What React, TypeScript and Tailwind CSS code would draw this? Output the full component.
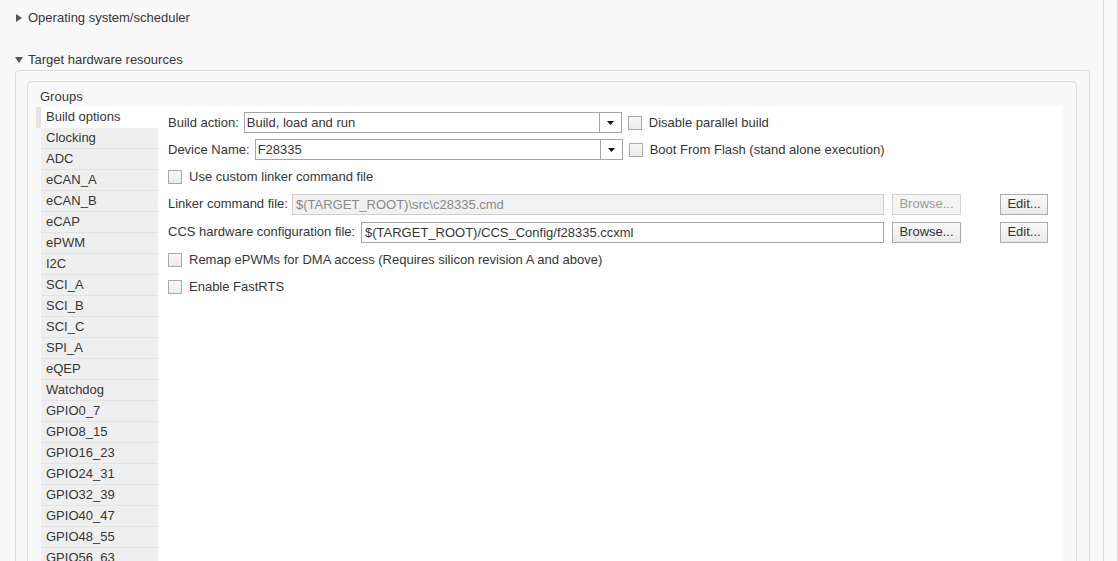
const groups = [
  'Build options',
  'Clocking',
  'ADC',
  'eCAN_A',
  'eCAN_B',
  'eCAP',
  'ePWM',
  'I2C',
  'SCI_A',
  'SCI_B',
  'SCI_C',
  'SPI_A',
  'eQEP',
  'Watchdog',
  'GPIO0_7',
  'GPIO8_15',
  'GPIO16_23',
  'GPIO24_31',
  'GPIO32_39',
  'GPIO40_47',
  'GPIO48_55',
  'GPIO56_63',
];

const Checkbox = () => (
  <span className="inline-block w-[14px] h-[14px] border border-[#a9a9a9] bg-gradient-to-b from-[#f7f7f7] to-[#ececec] shrink-0" />
);

const Select = ({ value, width }: { value: string; width: string }) => (
  <div className={`${width} h-[21px] flex border border-[#a5a5a5] bg-white`}>
    <div className="flex-1 pl-[2px] leading-[19px]">{value}</div>
    <div className="w-[22px] border-l border-[#a5a5a5] flex items-center justify-center bg-white">
      <svg width="7" height="4" viewBox="0 0 7 4">
        <path d="M0 0h7L3.5 4z" fill="#111" />
      </svg>
    </div>
  </div>
);

const Button = ({ label, disabled, width }: { label: string; disabled?: boolean; width: string }) => (
  <div
    className={`${width} h-[21px] flex items-center justify-center border ${
      disabled
        ? 'border-[#d2d2d2] text-[#9a9a9a] bg-[#f4f4f4]'
        : 'border-[#acacac] text-[#333] bg-gradient-to-b from-[#fafafa] to-[#e9e9e9]'
    }`}
  >
    {label}
  </div>
);

const App = () => {
  return (
    <div
      className="w-[1118px] h-[561px] overflow-hidden flex bg-[#f9f9f9] text-[13px] text-[#363636]"
      style={{ fontFamily: '"Liberation Sans", Arial, sans-serif' }}
    >
      <div className="w-[1104px] border-r border-[#dcdcdc] shrink-0">
        <div className="pt-[10px] h-[26px] flex items-center">
          <div className="flex items-center h-[16px] pl-[16px]">
            <svg width="6" height="8" viewBox="0 0 6 8" className="mr-[6px]">
              <path d="M0 0l6 4-6 4z" fill="#555" />
            </svg>
            <span>Operating system/scheduler</span>
          </div>
        </div>
        <div className="mt-[25px] h-[17px] flex items-center pl-[15px]">
          <svg width="8" height="6" viewBox="0 0 8 6" className="mr-[5px]">
            <path d="M0 0h8L4 6z" fill="#555" />
          </svg>
          <span>Target hardware resources</span>
        </div>
        <div className="ml-[15px] mt-[2px] w-[1075px] h-[600px] border border-[#dcdcdc] rounded-[4px] pl-[11px] pr-[12px] pt-[10px]">
          <div className="w-[1050px] h-[600px] border border-[#dcdcdc] rounded-[4px] pl-[8px] pr-[14px]">
            <div className="pt-[7px] h-[24px] pl-[4px] leading-[15px]">Groups</div>
            <div className="flex">
              <div className="w-[122px] shrink-0 pt-[1px]">
                {groups.map((g, i) =>
                  i === 0 ? (
                    <div
                      key={g}
                      className="h-[21px] border-l-[5px] border-[#e4e4e4] bg-white pl-[5px] leading-[20px]"
                    >
                      {g}
                    </div>
                  ) : (
                    <div
                      key={g}
                      className="h-[21px] ml-[5px] bg-[#efefef] border-b border-[#e3e3e3] pl-[5px] leading-[20px]"
                    >
                      {g}
                    </div>
                  ),
                )}
              </div>
              <div className="flex-1 bg-white h-[500px] pt-[6px] pl-[10px]">
                <div className="flex items-center h-[21px]">
                  <span className="mr-[5px]">Build action:</span>
                  <Select value="Build, load and run" width="w-[378px]" />
                  <span className="ml-[6px] mr-[7px] flex">
                    <Checkbox />
                  </span>
                  <span>Disable parallel build</span>
                </div>
                <div className="flex items-center h-[21px] mt-[6px]">
                  <span className="mr-[5px]">Device Name:</span>
                  <Select value="F28335" width="w-[368px]" />
                  <span className="ml-[6px] mr-[7px] flex">
                    <Checkbox />
                  </span>
                  <span>Boot From Flash (stand alone execution)</span>
                </div>
                <div className="flex items-center h-[21px] mt-[6px]">
                  <span className="mr-[7px] flex">
                    <Checkbox />
                  </span>
                  <span>Use custom linker command file</span>
                </div>
                <div className="flex items-center h-[22px] mt-[6px]">
                  <span className="mr-[4px] w-[120px]">Linker command file:</span>
                  <div className="w-[592px] h-[21px] border border-[#cfcfcf] bg-[#f1f1f1] text-[#8a8a8a] pl-[3px] leading-[19px]">
                    $(TARGET_ROOT)\src\c28335.cmd
                  </div>
                  <div className="ml-[8px]">
                    <Button label="Browse..." disabled width="w-[69px]" />
                  </div>
                  <div className="ml-[39px]">
                    <Button label="Edit..." width="w-[48px]" />
                  </div>
                </div>
                <div className="flex items-center h-[22px] mt-[6px]">
                  <span className="w-[193px]">CCS hardware configuration file:</span>
                  <div className="w-[523px] h-[21px] border border-[#a5a5a5] bg-white pl-[3px] leading-[19px]">
                    $(TARGET_ROOT)/CCS_Config/f28335.ccxml
                  </div>
                  <div className="ml-[8px]">
                    <Button label="Browse..." width="w-[69px]" />
                  </div>
                  <div className="ml-[39px]">
                    <Button label="Edit..." width="w-[48px]" />
                  </div>
                </div>
                <div className="flex items-center h-[21px] mt-[6px]">
                  <span className="mr-[7px] flex">
                    <Checkbox />
                  </span>
                  <span>Remap ePWMs for DMA access (Requires silicon revision A and above)</span>
                </div>
                <div className="flex items-center h-[21px] mt-[6px]">
                  <span className="mr-[7px] flex">
                    <Checkbox />
                  </span>
                  <span>Enable FastRTS</span>
                </div>
              </div>
            </div>
          </div>
        </div>
      </div>
      <div className="w-[14px] border-r border-[#dcdcdc] bg-[#fafafa] shrink-0" />
    </div>
  );
};

export default App;
